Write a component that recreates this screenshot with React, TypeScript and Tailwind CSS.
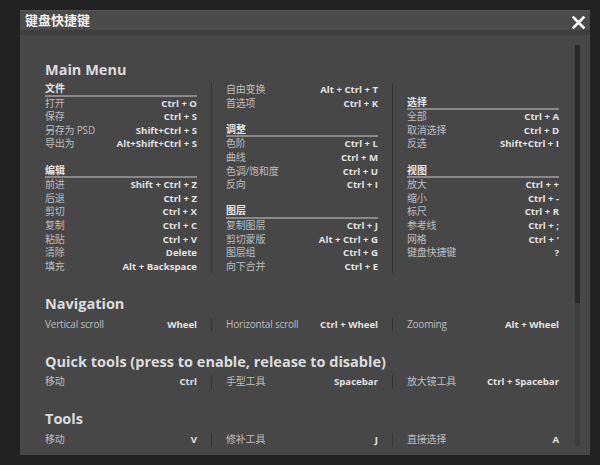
type Row = { label?: string; keys?: string; head?: boolean };

const blank: Row = {};

const mainMenu: Row[][] = [
  [
    { label: "文件", head: true },
    { label: "打开", keys: "Ctrl + O" },
    { label: "保存", keys: "Ctrl + S" },
    { label: "另存为 PSD", keys: "Shift+Ctrl + S" },
    { label: "导出为", keys: "Alt+Shift+Ctrl + S" },
    blank,
    { label: "编辑", head: true },
    { label: "前进", keys: "Shift + Ctrl + Z" },
    { label: "后退", keys: "Ctrl + Z" },
    { label: "剪切", keys: "Ctrl + X" },
    { label: "复制", keys: "Ctrl + C" },
    { label: "粘贴", keys: "Ctrl + V" },
    { label: "清除", keys: "Delete" },
    { label: "填充", keys: "Alt + Backspace" },
  ],
  [
    { label: "自由变换", keys: "Alt + Ctrl + T" },
    { label: "首选项", keys: "Ctrl + K" },
    blank,
    { label: "调整", head: true },
    { label: "色阶", keys: "Ctrl + L" },
    { label: "曲线", keys: "Ctrl + M" },
    { label: "色调/饱和度", keys: "Ctrl + U" },
    { label: "反向", keys: "Ctrl + I" },
    blank,
    { label: "图层", head: true },
    { label: "复制图层", keys: "Ctrl + J" },
    { label: "剪切蒙版", keys: "Alt + Ctrl + G" },
    { label: "图层组", keys: "Ctrl + G" },
    { label: "向下合并", keys: "Ctrl + E" },
  ],
  [
    blank,
    { label: "选择", head: true },
    { label: "全部", keys: "Ctrl + A" },
    { label: "取消选择", keys: "Ctrl + D" },
    { label: "反选", keys: "Shift+Ctrl + I" },
    blank,
    { label: "视图", head: true },
    { label: "放大", keys: "Ctrl + +" },
    { label: "缩小", keys: "Ctrl + -" },
    { label: "标尺", keys: "Ctrl + R" },
    { label: "参考线", keys: "Ctrl + ;" },
    { label: "网格", keys: "Ctrl + '" },
    { label: "键盘快捷键", keys: "?" },
  ],
];

const sections: { title: string; rows: Row[] }[] = [
  {
    title: "Navigation",
    rows: [
      { label: "Vertical scroll", keys: "Wheel" },
      { label: "Horizontal scroll", keys: "Ctrl + Wheel" },
      { label: "Zooming", keys: "Alt + Wheel" },
    ],
  },
  {
    title: "Quick tools (press to enable, release to disable)",
    rows: [
      { label: "移动", keys: "Ctrl" },
      { label: "手型工具", keys: "Spacebar" },
      { label: "放大镜工具", keys: "Ctrl + Spacebar" },
    ],
  },
  {
    title: "Tools",
    rows: [
      { label: "移动", keys: "V" },
      { label: "修补工具", keys: "J" },
      { label: "直接选择", keys: "A" },
    ],
  },
];

function Line({ row }: { row: Row }) {
  if (row.head) {
    return (
      <div className="h-[13.6px] border-b-2 border-[#8a8a8a] text-[10px] leading-[11.6px] font-bold text-[#e4e4e4]">
        {row.label}
      </div>
    );
  }
  return (
    <div className="flex h-[13.6px] items-center justify-between leading-[13.6px]">
      <span className="text-[10px] tracking-[-0.2px] text-[#bdbdbd]">{row.label}</span>
      <span className="text-[9.6px] font-bold text-[#e2e2e2]">{row.keys}</span>
    </div>
  );
}

function Columns({ children }: { children: React.ReactNode[] }) {
  return (
    <div className="flex">
      {children.map((c, i) => (
        <div
          key={i}
          className={
            i === 0
              ? "w-[152px]"
              : "ml-[14px] w-[167px] border-l border-[#363636] pl-[14px]"
          }
        >
          {c}
        </div>
      ))}
    </div>
  );
}

function Heading({ text, first }: { text: string; first?: boolean }) {
  return (
    <h2
      className={
        "h-[20px] text-[14.5px] leading-[20px] font-bold text-[#dcdcdc] whitespace-nowrap " +
        (first ? "mt-[25px] mb-[3px]" : "mt-[20.5px] mb-[3.7px]")
      }
    >
      {text}
    </h2>
  );
}

export default function App() {
  return (
    <div className="h-[465px] w-[600px] bg-[#222222] pt-[10px] pl-[20px] font-['Open_Sans','Noto_Sans_CJK_SC',sans-serif]">
      <div className="flex h-[445px] w-[570px] flex-col overflow-hidden bg-[#474747]">
        {/* Title bar */}
        <div className="flex h-[20px] items-center justify-between border-t border-[#555555] bg-[#4b4b4b] pl-[5px] pr-[5px]">
          <span className="text-[13px] leading-none font-bold text-[#f0f0f0]">键盘快捷键</span>
          <svg width="13" height="13" viewBox="0 0 13 13" className="mt-[4px]">
            <path d="M1.5 1.5 L11.5 11.5 M11.5 1.5 L1.5 11.5" stroke="#ffffff" strokeWidth="2.6" strokeLinecap="square" />
          </svg>
        </div>
        <div className="h-[5px] bg-[#3f3f3f]" />

        {/* Body */}
        <div className="flex min-h-0 flex-1">
          <div className="ml-[25px] w-[515px] shrink-0">
            <Heading text="Main Menu" first />
            <Columns>
              {mainMenu.map((col, ci) => (
                <div key={ci}>
                  {col.map((r, ri) => (
                    <Line key={ri} row={r} />
                  ))}
                </div>
              ))}
            </Columns>

            {sections.map((s) => (
              <div key={s.title}>
                <Heading text={s.title} />
                <Columns>
                  {s.rows.map((r, ri) => (
                    <Line key={ri} row={r} />
                  ))}
                </Columns>
              </div>
            ))}
          </div>

          {/* Scrollbar */}
          <div className="mt-[10px] mb-[9px] ml-[15px] w-[5px] bg-[#3c3c3c]">
            <div className="h-[258px] bg-[#2a2a2a]" />
          </div>
        </div>
      </div>
    </div>
  );
}
